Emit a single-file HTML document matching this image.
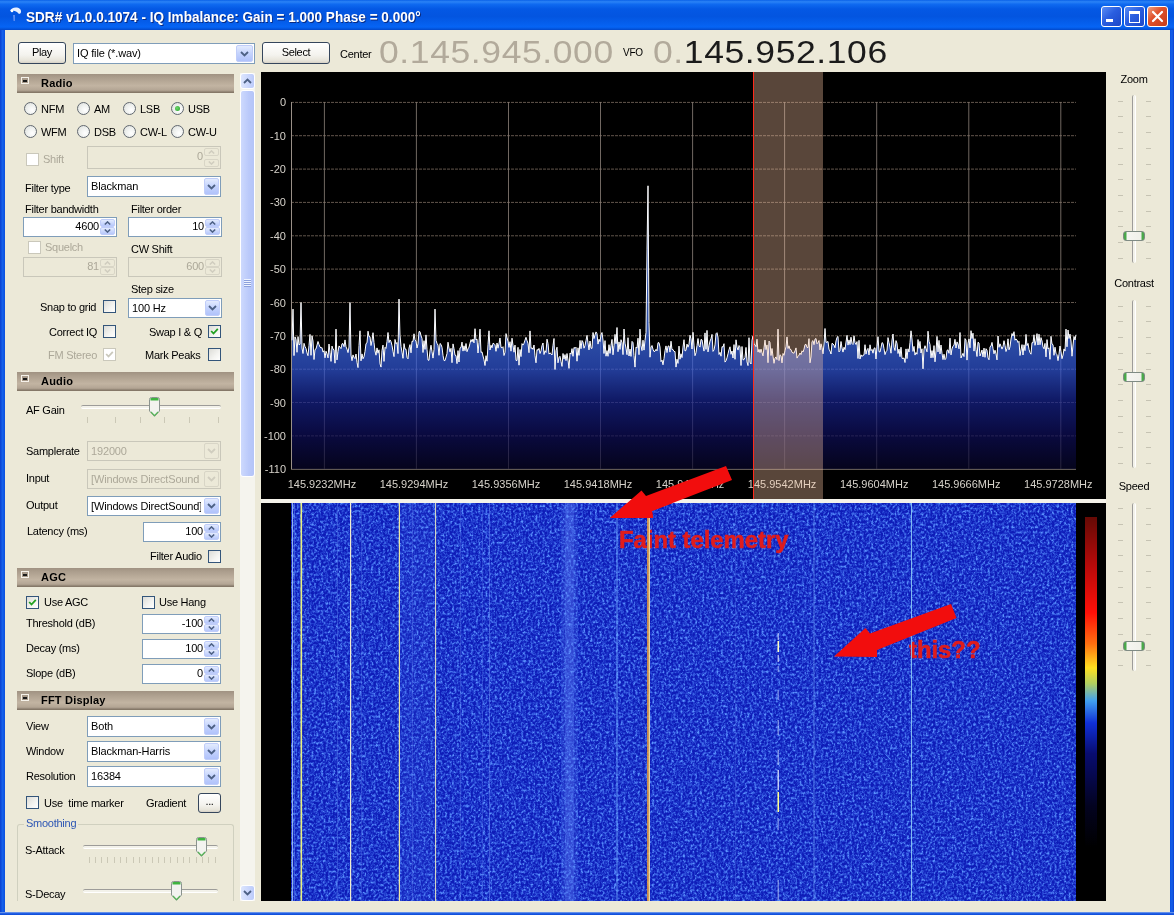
<!DOCTYPE html>
<html><head><meta charset="utf-8"><title>SDR#</title>
<style>
html,body{margin:0;padding:0;}
body{width:1174px;height:915px;overflow:hidden;position:relative;background:#ece9d8;font-family:"Liberation Sans",sans-serif;font-size:11px;color:#000;}
.a{position:absolute;}
.t{position:absolute;white-space:nowrap;line-height:14px;height:14px;font-size:11px;letter-spacing:-0.26px;}
.dis{color:#aca899;}
/* window chrome */
#titlebar{left:0;top:0;width:1174px;height:30px;background:linear-gradient(to bottom,#0a61e8 0%,#2b83f6 6%,#0f6af0 14%,#0458e4 30%,#0355e0 55%,#0560ee 80%,#0664f5 90%,#0355dd 96%,#0347c8 100%);}
#bl{left:0;top:30px;width:5px;height:885px;background:linear-gradient(to right,#0a3fd0,#1560ea 50%,#0a4fe0);}
#br{left:1170px;top:30px;width:4px;height:885px;background:linear-gradient(to right,#0a4fe0,#1560ea 50%,#0a3fd0);}
#bb{left:0;top:912px;width:1174px;height:3px;background:linear-gradient(to bottom,#9db8ee 0,#2a66e6 34%,#0a49d8 100%);}
#title{left:26px;top:9px;color:#fff;font-weight:bold;font-size:14.5px;line-height:16px;height:16px;letter-spacing:0;transform:scaleX(0.936);transform-origin:0 0;text-shadow:1px 1px 0 #0a2a80;}
.wbtn{position:absolute;top:6px;width:19px;height:19px;border:1px solid #fff;border-radius:3px;background:linear-gradient(135deg,#5a8df5 0%,#2a5ee0 45%,#1c47c8 100%);}
/* buttons */
.btn{position:absolute;box-sizing:border-box;letter-spacing:-0.33px;border:1px solid #35465c;border-radius:3px;background:linear-gradient(to bottom,#ffffff 0%,#f4f3ee 60%,#e6e3d8 90%,#d6d0c5 100%);text-align:center;font-size:11px;line-height:19px;}
/* combo */
.combo{position:absolute;box-sizing:border-box;border:1px solid #7f9db9;background:#fff;font-size:11px;line-height:17px;padding-left:3px;white-space:nowrap;overflow:hidden;letter-spacing:-0.15px;}
.combo u{position:absolute;left:3px;top:0;right:19px;bottom:0;overflow:hidden;text-decoration:none;}
.combo .arr{position:absolute;right:1px;top:1px;bottom:1px;width:15px;border-radius:2px;background:linear-gradient(to bottom,#e3ebfe 0%,#c4d3fd 50%,#b0c2fb 100%);border:1px solid #c0cdf9;box-sizing:border-box;}
.combo .arr svg{position:absolute;left:2px;top:50%;margin-top:-3px;}
.combo.d{background:#ece9d8;border-color:#c9c7ba;color:#aca899;}
.combo.d .arr{background:#ece9d8;border-color:#d8d5c6;}
/* spin */
.spin{position:absolute;box-sizing:border-box;border:1px solid #7f9db9;background:#fff;font-size:11px;line-height:17px;text-align:right;padding-right:17px;white-space:nowrap;letter-spacing:-0.2px;}
.spin .ud{position:absolute;right:1px;top:1px;bottom:1px;width:15px;}
.spin .ud i{position:absolute;left:0;width:15px;height:8px;box-sizing:border-box;border:1px solid #c0cdf9;border-radius:2px;background:linear-gradient(to bottom,#e3ebfe,#b6c7fb);}
.spin .ud i.u{top:0;}
.spin .ud i.dn{bottom:0;}
.spin .ud svg{position:absolute;left:3px;}
.spin.d{background:#ece9d8;border-color:#c9c7ba;color:#aca899;}
.spin.d .ud i{background:#ece9d8;border-color:#d8d5c6;}
/* checkbox / radio */
.chk{position:absolute;width:11px;height:11px;border:1px solid #33557a;background:linear-gradient(135deg,#dcdcd7 0%,#f4f4f1 60%,#ffffff 100%);}
.chk.d{border-color:#cac8bb;background:#fff;}
.chk svg{position:absolute;left:1px;top:1px;}
.rad{position:absolute;width:11px;height:11px;border:1px solid #60676f;border-radius:50%;background:radial-gradient(circle at 65% 65%,#ffffff 0%,#eef0ee 50%,#d8dad6 100%);}
.rad b{position:absolute;left:3px;top:3px;width:5px;height:5px;border-radius:50%;background:radial-gradient(circle at 40% 40%,#6fd66f,#21a121);}
/* section header */
.hdr{position:absolute;left:17px;width:217px;height:19px;box-sizing:border-box;background:linear-gradient(to bottom,#a09282 0%,#ac9e8d 20%,#c2b4a2 65%,#b3a594 90%,#8b7e6f 100%);border-bottom:1px solid #857868;}
.hdr span{position:absolute;left:24px;top:2px;font-weight:bold;font-size:11px;line-height:14px;letter-spacing:0.2px;}
.hdr i{position:absolute;left:4px;top:3px;width:6px;height:5px;border:1px solid #f6f2ea;background:#a89a8a;}
.hdr i:after{content:"";position:absolute;left:1px;top:2px;width:4px;height:1.5px;background:#1a1a1a;}
/* sliders */
.trk{position:absolute;height:2px;border-top:1px solid #9d9c99;border-bottom:1px solid #fff;background:#f3f2ea;border-radius:2px;}
.vtrk{position:absolute;width:2px;border-left:1px solid #9d9c99;border-right:1px solid #fff;background:#f3f2ea;border-radius:2px;}
.tick{position:absolute;width:1px;height:6px;background:#cbc8b6;}
.htick{position:absolute;width:5px;height:1px;background:#c6c3b3;}
.big{font-size:30.5px;line-height:38px;color:#b2aa9b;letter-spacing:0.5px;white-space:nowrap;transform:scaleX(1.165);transform-origin:0 0;}
#w{position:absolute;left:0;top:0;width:1174px;height:915px;overflow:hidden;will-change:transform;}

</style></head>
<body>
<div id="w">
<!-- window chrome -->
<div class="a" id="titlebar"></div>
<div class="a" id="bl"></div><div class="a" id="br"></div><div class="a" id="bb"></div>
<svg class="a" style="left:7px;top:6px" width="18" height="18" viewBox="0 0 18 18">
  <path d="M3 5 C4 1.5 10 0.5 13 3 C15 5 14 8 12 8 L10 6 C8 4.5 5 4.5 3 5Z" fill="#e8f0ff"/>
  <path d="M6 9 L8 9 L8 15 L6.5 15 Z" fill="#5a8cf0"/>
  <circle cx="5" cy="5" r="1.3" fill="#fff"/>
</svg>
<div class="t" id="title">SDR# v1.0.0.1074 - IQ Imbalance: Gain = 1.000 Phase = 0.000°</div>
<div class="wbtn" style="left:1101px"><div class="a" style="left:4px;top:12px;width:7px;height:3px;background:#fff"></div></div>
<div class="wbtn" style="left:1124px"><div class="a" style="left:4px;top:4px;width:9px;height:8px;border:1px solid #fff;border-top:3px solid #fff;box-sizing:content-box"></div></div>
<div class="wbtn" style="left:1147px;background:linear-gradient(135deg,#f0a080 0%,#e0522c 40%,#c83c18 100%)">
  <svg class="a" style="left:3px;top:3px" width="13" height="13" viewBox="0 0 13 13"><path d="M2 2 L11 11 M11 2 L2 11" stroke="#fff" stroke-width="2.2" stroke-linecap="round"/></svg>
</div>

<!-- toolbar -->
<div class="btn" style="left:18px;top:42px;width:48px;height:22px;">Play</div>
<div class="combo" style="left:73px;top:43px;width:182px;height:21px;line-height:19px;"><u>IQ file (*.wav)</u><div class="arr" style="width:17px"><svg width="9" height="6" viewBox="0 0 9 6" style="left:3px"><path d="M1 1 L4.5 4.5 L8 1" fill="none" stroke="#4d6185" stroke-width="1.8"/></svg></div></div>
<div class="btn" style="left:262px;top:42px;width:68px;height:22px;">Select</div>
<div class="t" style="left:340px;top:47px;">Center</div>
<div class="a big" style="left:379px;top:33px;">0.145.945.000</div>
<div class="t" style="left:623px;top:46px;font-size:10px;">VFO</div>
<div class="a big" style="left:653px;top:33px;">0.<span style="color:#1b1b1b">145.952.106</span></div>

<div class="hdr" style="top:74px"><i></i><span>Radio</span></div>
<div class="rad" style="left:23.5px;top:102.0px"></div>
<div class="t " style="left:41px;top:102px;">NFM</div>
<div class="rad" style="left:76.5px;top:102.0px"></div>
<div class="t " style="left:94px;top:102px;">AM</div>
<div class="rad" style="left:122.5px;top:102.0px"></div>
<div class="t " style="left:140px;top:102px;">LSB</div>
<div class="rad" style="left:170.5px;top:102.0px"><b></b></div>
<div class="t " style="left:188px;top:102px;">USB</div>
<div class="rad" style="left:23.5px;top:125.0px"></div>
<div class="t " style="left:41px;top:125px;">WFM</div>
<div class="rad" style="left:76.5px;top:125.0px"></div>
<div class="t " style="left:94px;top:125px;">DSB</div>
<div class="rad" style="left:122.5px;top:125.0px"></div>
<div class="t " style="left:140px;top:125px;">CW-L</div>
<div class="rad" style="left:170.5px;top:125.0px"></div>
<div class="t " style="left:188px;top:125px;">CW-U</div>
<div class="chk d" style="left:26px;top:153px"></div>
<div class="t dis" style="left:43px;top:152px;">Shift</div>
<div class="spin d" style="left:87px;top:146px;width:134px;height:23px;line-height:19px">0<div class="ud"><i class="u"><svg style="top:1px" width="7" height="4" viewBox="0 0 7 4"><path d="M0.8 3.5 L3.5 0.9 L6.2 3.5" fill="none" stroke="#d0cdbf" stroke-width="1.5"/></svg></i><i class="dn"><svg style="top:1px" width="7" height="4" viewBox="0 0 7 4"><path d="M0.8 0.5 L3.5 3.1 L6.2 0.5" fill="none" stroke="#d0cdbf" stroke-width="1.5"/></svg></i></div></div>
<div class="t " style="left:25px;top:181px;">Filter type</div>
<div class="combo" style="left:87px;top:176px;width:134px;height:21px;line-height:19px"><u>Blackman</u><div class="arr"><svg width="9" height="6" viewBox="0 0 9 6"><path d="M1 1 L4.5 4.5 L8 1" fill="none" stroke="#4d6185" stroke-width="1.8"/></svg></div></div>
<div class="t " style="left:25px;top:202px;">Filter bandwidth</div>
<div class="t " style="left:131px;top:202px;">Filter order</div>
<div class="spin" style="left:23px;top:217px;width:94px;height:20px;line-height:16px">4600<div class="ud"><i class="u"><svg style="top:1px" width="7" height="4" viewBox="0 0 7 4"><path d="M0.8 3.5 L3.5 0.9 L6.2 3.5" fill="none" stroke="#4d6185" stroke-width="1.5"/></svg></i><i class="dn"><svg style="top:1px" width="7" height="4" viewBox="0 0 7 4"><path d="M0.8 0.5 L3.5 3.1 L6.2 0.5" fill="none" stroke="#4d6185" stroke-width="1.5"/></svg></i></div></div>
<div class="spin" style="left:128px;top:217px;width:94px;height:20px;line-height:16px">10<div class="ud"><i class="u"><svg style="top:1px" width="7" height="4" viewBox="0 0 7 4"><path d="M0.8 3.5 L3.5 0.9 L6.2 3.5" fill="none" stroke="#4d6185" stroke-width="1.5"/></svg></i><i class="dn"><svg style="top:1px" width="7" height="4" viewBox="0 0 7 4"><path d="M0.8 0.5 L3.5 3.1 L6.2 0.5" fill="none" stroke="#4d6185" stroke-width="1.5"/></svg></i></div></div>
<div class="chk d" style="left:28px;top:241px"></div>
<div class="t dis" style="left:45px;top:240px;">Squelch</div>
<div class="t " style="left:131px;top:242px;">CW Shift</div>
<div class="spin d" style="left:23px;top:257px;width:94px;height:20px;line-height:16px">81<div class="ud"><i class="u"><svg style="top:1px" width="7" height="4" viewBox="0 0 7 4"><path d="M0.8 3.5 L3.5 0.9 L6.2 3.5" fill="none" stroke="#d0cdbf" stroke-width="1.5"/></svg></i><i class="dn"><svg style="top:1px" width="7" height="4" viewBox="0 0 7 4"><path d="M0.8 0.5 L3.5 3.1 L6.2 0.5" fill="none" stroke="#d0cdbf" stroke-width="1.5"/></svg></i></div></div>
<div class="spin d" style="left:128px;top:257px;width:94px;height:20px;line-height:16px">600<div class="ud"><i class="u"><svg style="top:1px" width="7" height="4" viewBox="0 0 7 4"><path d="M0.8 3.5 L3.5 0.9 L6.2 3.5" fill="none" stroke="#d0cdbf" stroke-width="1.5"/></svg></i><i class="dn"><svg style="top:1px" width="7" height="4" viewBox="0 0 7 4"><path d="M0.8 0.5 L3.5 3.1 L6.2 0.5" fill="none" stroke="#d0cdbf" stroke-width="1.5"/></svg></i></div></div>
<div class="t " style="left:131px;top:282px;">Step size</div>
<div class="t " style="left:40px;top:300px;">Snap to grid</div>
<div class="chk" style="left:103px;top:300px"></div>
<div class="combo" style="left:128px;top:298px;width:94px;height:20px;line-height:18px"><u>100 Hz</u><div class="arr"><svg width="9" height="6" viewBox="0 0 9 6"><path d="M1 1 L4.5 4.5 L8 1" fill="none" stroke="#4d6185" stroke-width="1.8"/></svg></div></div>
<div class="t " style="left:49px;top:325px;">Correct IQ</div>
<div class="chk" style="left:103px;top:325px"></div>
<div class="t " style="left:149px;top:325px;">Swap I &amp; Q</div>
<div class="chk" style="left:208px;top:325px"><svg width="9" height="9" viewBox="0 0 9 9"><path d="M1.2 4 L3.5 6.5 L7.8 1.8" fill="none" stroke="#21a121" stroke-width="1.8"/></svg></div>
<div class="t dis" style="left:48px;top:348px;">FM Stereo</div>
<div class="chk d" style="left:103px;top:348px"><svg width="9" height="9" viewBox="0 0 9 9"><path d="M1.2 4 L3.5 6.5 L7.8 1.8" fill="none" stroke="#cac8bb" stroke-width="1.8"/></svg></div>
<div class="t " style="left:145px;top:348px;">Mark Peaks</div>
<div class="chk" style="left:208px;top:348px"></div>
<div class="hdr" style="top:372px"><i></i><span>Audio</span></div>
<div class="t " style="left:26px;top:403px;">AF Gain</div>
<div class="trk" style="left:81px;top:405px;width:140px"></div>
<div class="tick" style="left:87.0px;top:417px"></div>
<div class="tick" style="left:115.0px;top:417px"></div>
<div class="tick" style="left:139.5px;top:417px"></div>
<div class="tick" style="left:164.0px;top:417px"></div>
<div class="tick" style="left:188.5px;top:417px"></div>
<div class="tick" style="left:217.5px;top:417px"></div>
<svg class="a" style="left:149.0px;top:397px" width="11" height="20" viewBox="0 0 11 20"><path d="M0.5 2.5 Q0.5 0.5 2.5 0.5 L8.5 0.5 Q10.5 0.5 10.5 2.5 L10.5 14 L5.5 19.3 L0.5 14 Z" fill="#f3f3ef" stroke="#8a938e" stroke-width="1"/><path d="M1.5 2 Q1.5 1 2.5 1 L8.5 1 Q9.5 1 9.5 2 L9.5 3.5 L1.5 3.5Z" fill="#3fb33f"/><path d="M2 15 L5.5 18.6 L9 15" fill="none" stroke="#56b556" stroke-width="1.2"/></svg>
<div class="t " style="left:26px;top:444px;">Samplerate</div>
<div class="combo d" style="left:87px;top:441px;width:134px;height:20px;line-height:18px"><u>192000</u><div class="arr"><svg width="9" height="6" viewBox="0 0 9 6"><path d="M1 1 L4.5 4.5 L8 1" fill="none" stroke="#d0cdbf" stroke-width="1.8"/></svg></div></div>
<div class="t " style="left:26px;top:471px;">Input</div>
<div class="combo d" style="left:87px;top:469px;width:134px;height:20px;line-height:18px"><u>[Windows DirectSound</u><div class="arr"><svg width="9" height="6" viewBox="0 0 9 6"><path d="M1 1 L4.5 4.5 L8 1" fill="none" stroke="#d0cdbf" stroke-width="1.8"/></svg></div></div>
<div class="t " style="left:26px;top:498px;">Output</div>
<div class="combo" style="left:87px;top:496px;width:134px;height:20px;line-height:18px"><u>[Windows DirectSound]</u><div class="arr"><svg width="9" height="6" viewBox="0 0 9 6"><path d="M1 1 L4.5 4.5 L8 1" fill="none" stroke="#4d6185" stroke-width="1.8"/></svg></div></div>
<div class="t " style="left:27px;top:524px;">Latency (ms)</div>
<div class="spin" style="left:143px;top:522px;width:78px;height:20px;line-height:16px">100<div class="ud"><i class="u"><svg style="top:1px" width="7" height="4" viewBox="0 0 7 4"><path d="M0.8 3.5 L3.5 0.9 L6.2 3.5" fill="none" stroke="#4d6185" stroke-width="1.5"/></svg></i><i class="dn"><svg style="top:1px" width="7" height="4" viewBox="0 0 7 4"><path d="M0.8 0.5 L3.5 3.1 L6.2 0.5" fill="none" stroke="#4d6185" stroke-width="1.5"/></svg></i></div></div>
<div class="t " style="left:150px;top:549px;">Filter Audio</div>
<div class="chk" style="left:208px;top:550px"></div>
<div class="hdr" style="top:568px"><i></i><span>AGC</span></div>
<div class="chk" style="left:26px;top:596px"><svg width="9" height="9" viewBox="0 0 9 9"><path d="M1.2 4 L3.5 6.5 L7.8 1.8" fill="none" stroke="#21a121" stroke-width="1.8"/></svg></div>
<div class="t " style="left:44px;top:595px;">Use AGC</div>
<div class="chk" style="left:142px;top:596px"></div>
<div class="t " style="left:159px;top:595px;">Use Hang</div>
<div class="t " style="left:26px;top:616px;">Threshold (dB)</div>
<div class="spin" style="left:142px;top:614px;width:79px;height:20px;line-height:16px">-100<div class="ud"><i class="u"><svg style="top:1px" width="7" height="4" viewBox="0 0 7 4"><path d="M0.8 3.5 L3.5 0.9 L6.2 3.5" fill="none" stroke="#4d6185" stroke-width="1.5"/></svg></i><i class="dn"><svg style="top:1px" width="7" height="4" viewBox="0 0 7 4"><path d="M0.8 0.5 L3.5 3.1 L6.2 0.5" fill="none" stroke="#4d6185" stroke-width="1.5"/></svg></i></div></div>
<div class="t " style="left:26px;top:641px;">Decay (ms)</div>
<div class="spin" style="left:142px;top:639px;width:79px;height:20px;line-height:16px">100<div class="ud"><i class="u"><svg style="top:1px" width="7" height="4" viewBox="0 0 7 4"><path d="M0.8 3.5 L3.5 0.9 L6.2 3.5" fill="none" stroke="#4d6185" stroke-width="1.5"/></svg></i><i class="dn"><svg style="top:1px" width="7" height="4" viewBox="0 0 7 4"><path d="M0.8 0.5 L3.5 3.1 L6.2 0.5" fill="none" stroke="#4d6185" stroke-width="1.5"/></svg></i></div></div>
<div class="t " style="left:26px;top:666px;">Slope (dB)</div>
<div class="spin" style="left:142px;top:664px;width:79px;height:20px;line-height:16px">0<div class="ud"><i class="u"><svg style="top:1px" width="7" height="4" viewBox="0 0 7 4"><path d="M0.8 3.5 L3.5 0.9 L6.2 3.5" fill="none" stroke="#4d6185" stroke-width="1.5"/></svg></i><i class="dn"><svg style="top:1px" width="7" height="4" viewBox="0 0 7 4"><path d="M0.8 0.5 L3.5 3.1 L6.2 0.5" fill="none" stroke="#4d6185" stroke-width="1.5"/></svg></i></div></div>
<div class="hdr" style="top:691px"><i></i><span>FFT Display</span></div>
<div class="t " style="left:26px;top:719px;">View</div>
<div class="combo" style="left:87px;top:716px;width:134px;height:21px;line-height:19px"><u>Both</u><div class="arr"><svg width="9" height="6" viewBox="0 0 9 6"><path d="M1 1 L4.5 4.5 L8 1" fill="none" stroke="#4d6185" stroke-width="1.8"/></svg></div></div>
<div class="t " style="left:26px;top:744px;">Window</div>
<div class="combo" style="left:87px;top:741px;width:134px;height:21px;line-height:19px"><u>Blackman-Harris</u><div class="arr"><svg width="9" height="6" viewBox="0 0 9 6"><path d="M1 1 L4.5 4.5 L8 1" fill="none" stroke="#4d6185" stroke-width="1.8"/></svg></div></div>
<div class="t " style="left:26px;top:769px;">Resolution</div>
<div class="combo" style="left:87px;top:766px;width:134px;height:21px;line-height:19px"><u>16384</u><div class="arr"><svg width="9" height="6" viewBox="0 0 9 6"><path d="M1 1 L4.5 4.5 L8 1" fill="none" stroke="#4d6185" stroke-width="1.8"/></svg></div></div>
<div class="chk" style="left:26px;top:796px"></div>
<div class="t " style="left:44px;top:796px;">Use&nbsp; time marker</div>
<div class="t " style="left:146px;top:796px;">Gradient</div>
<div class="btn" style="left:198px;top:793px;width:23px;height:20px;line-height:14px">...</div>
<div class="a" style="left:17px;top:824px;width:217px;height:77px;border:1px solid #d0d0bf;border-bottom:none;border-radius:3px 3px 0 0;box-sizing:border-box"></div>
<div class="t" style="left:24px;top:816px;color:#2d56b4;background:#ece9d8;padding:0 2px">Smoothing</div>
<div class="t " style="left:25px;top:843px;">S-Attack</div>
<div class="trk" style="left:83px;top:845px;width:135px"></div>
<div class="tick" style="left:88.5px;top:857px"></div>
<div class="tick" style="left:94.8px;top:857px"></div>
<div class="tick" style="left:101.1px;top:857px"></div>
<div class="tick" style="left:107.4px;top:857px"></div>
<div class="tick" style="left:113.7px;top:857px"></div>
<div class="tick" style="left:120.0px;top:857px"></div>
<div class="tick" style="left:126.3px;top:857px"></div>
<div class="tick" style="left:132.6px;top:857px"></div>
<div class="tick" style="left:138.9px;top:857px"></div>
<div class="tick" style="left:145.2px;top:857px"></div>
<div class="tick" style="left:151.5px;top:857px"></div>
<div class="tick" style="left:157.8px;top:857px"></div>
<div class="tick" style="left:164.1px;top:857px"></div>
<div class="tick" style="left:170.4px;top:857px"></div>
<div class="tick" style="left:176.7px;top:857px"></div>
<div class="tick" style="left:183.0px;top:857px"></div>
<div class="tick" style="left:189.3px;top:857px"></div>
<div class="tick" style="left:195.6px;top:857px"></div>
<div class="tick" style="left:201.9px;top:857px"></div>
<div class="tick" style="left:208.2px;top:857px"></div>
<div class="tick" style="left:214.5px;top:857px"></div>
<svg class="a" style="left:196.0px;top:837px" width="11" height="20" viewBox="0 0 11 20"><path d="M0.5 2.5 Q0.5 0.5 2.5 0.5 L8.5 0.5 Q10.5 0.5 10.5 2.5 L10.5 14 L5.5 19.3 L0.5 14 Z" fill="#f3f3ef" stroke="#8a938e" stroke-width="1"/><path d="M1.5 2 Q1.5 1 2.5 1 L8.5 1 Q9.5 1 9.5 2 L9.5 3.5 L1.5 3.5Z" fill="#3fb33f"/><path d="M2 15 L5.5 18.6 L9 15" fill="none" stroke="#56b556" stroke-width="1.2"/></svg>
<div class="t " style="left:25px;top:887px;">S-Decay</div>
<div class="trk" style="left:83px;top:889px;width:135px"></div>
<svg class="a" style="left:171.0px;top:881px" width="11" height="20" viewBox="0 0 11 20"><path d="M0.5 2.5 Q0.5 0.5 2.5 0.5 L8.5 0.5 Q10.5 0.5 10.5 2.5 L10.5 14 L5.5 19.3 L0.5 14 Z" fill="#f3f3ef" stroke="#8a938e" stroke-width="1"/><path d="M1.5 2 Q1.5 1 2.5 1 L8.5 1 Q9.5 1 9.5 2 L9.5 3.5 L1.5 3.5Z" fill="#3fb33f"/><path d="M2 15 L5.5 18.6 L9 15" fill="none" stroke="#56b556" stroke-width="1.2"/></svg>
<div class="a" style="left:5px;top:901px;width:252px;height:11px;background:#ece9d8"></div>
<div class="a" style="left:240px;top:73px;width:15px;height:828px;background:#f5f4ee"></div>
<div class="a" style="left:240px;top:73px;width:15px;height:16px;box-sizing:border-box;border:1px solid #fff;border-radius:3px;background:linear-gradient(to right,#dde6fe,#bccbfb);"><svg class="a" style="left:2px;top:4px" width="9" height="6" viewBox="0 0 9 6"><path d="M1 5 L4.5 1.5 L8 5" fill="none" stroke="#4d6185" stroke-width="1.8"/></svg></div>
<div class="a" style="left:240px;top:885px;width:15px;height:16px;box-sizing:border-box;border:1px solid #fff;border-radius:3px;background:linear-gradient(to right,#dde6fe,#bccbfb);"><svg class="a" style="left:2px;top:4px" width="9" height="6" viewBox="0 0 9 6"><path d="M1 1 L4.5 4.5 L8 1" fill="none" stroke="#4d6185" stroke-width="1.8"/></svg></div>
<div class="a" style="left:240px;top:90px;width:15px;height:387px;box-sizing:border-box;border:1px solid #fff;border-radius:3px;background:linear-gradient(to right,#cdd9fd,#bac9fa 60%,#b4c4f8)"></div>
<div class="a" style="left:244px;top:279px;width:7px;height:1px;background:#eef3ff;border-bottom:1px solid #8ca0dc"></div>
<div class="a" style="left:244px;top:281px;width:7px;height:1px;background:#eef3ff;border-bottom:1px solid #8ca0dc"></div>
<div class="a" style="left:244px;top:283px;width:7px;height:1px;background:#eef3ff;border-bottom:1px solid #8ca0dc"></div>
<div class="a" style="left:244px;top:285px;width:7px;height:1px;background:#eef3ff;border-bottom:1px solid #8ca0dc"></div>
<svg class="a" style="left:261px;top:72px" width="845" height="427" viewBox="261 72 845 427" font-family="Liberation Sans, sans-serif" font-size="11">
<defs><linearGradient id="sf" gradientUnits="userSpaceOnUse" x1="0" y1="330" x2="0" y2="469"><stop offset="0" stop-color="#4375f3"/><stop offset="0.28" stop-color="#3157d9"/><stop offset="0.5" stop-color="#172592"/><stop offset="0.75" stop-color="#0e0e5b"/><stop offset="1" stop-color="#070628"/></linearGradient></defs>
<rect x="261" y="72" width="845" height="427" fill="#000"/>
<line x1="291" x2="1076" y1="102.4" y2="102.4" stroke="#74655b" stroke-width="1" stroke-dasharray="3 1" opacity="0.85"/>
<text x="286" y="106.4" text-anchor="end" fill="#d6d2ca">0</text>
<line x1="291" x2="1076" y1="135.7" y2="135.7" stroke="#74655b" stroke-width="1" stroke-dasharray="3 1" opacity="0.85"/>
<text x="286" y="139.7" text-anchor="end" fill="#d6d2ca">-10</text>
<line x1="291" x2="1076" y1="169.1" y2="169.1" stroke="#74655b" stroke-width="1" stroke-dasharray="3 1" opacity="0.85"/>
<text x="286" y="173.1" text-anchor="end" fill="#d6d2ca">-20</text>
<line x1="291" x2="1076" y1="202.4" y2="202.4" stroke="#74655b" stroke-width="1" stroke-dasharray="3 1" opacity="0.85"/>
<text x="286" y="206.4" text-anchor="end" fill="#d6d2ca">-30</text>
<line x1="291" x2="1076" y1="235.8" y2="235.8" stroke="#74655b" stroke-width="1" stroke-dasharray="3 1" opacity="0.85"/>
<text x="286" y="239.8" text-anchor="end" fill="#d6d2ca">-40</text>
<line x1="291" x2="1076" y1="269.1" y2="269.1" stroke="#74655b" stroke-width="1" stroke-dasharray="3 1" opacity="0.85"/>
<text x="286" y="273.1" text-anchor="end" fill="#d6d2ca">-50</text>
<line x1="291" x2="1076" y1="302.5" y2="302.5" stroke="#74655b" stroke-width="1" stroke-dasharray="3 1" opacity="0.85"/>
<text x="286" y="306.5" text-anchor="end" fill="#d6d2ca">-60</text>
<line x1="291" x2="1076" y1="335.8" y2="335.8" stroke="#74655b" stroke-width="1" stroke-dasharray="3 1" opacity="0.85"/>
<text x="286" y="339.8" text-anchor="end" fill="#d6d2ca">-70</text>
<line x1="291" x2="1076" y1="369.2" y2="369.2" stroke="#74655b" stroke-width="1" stroke-dasharray="3 1" opacity="0.85"/>
<text x="286" y="373.2" text-anchor="end" fill="#d6d2ca">-80</text>
<line x1="291" x2="1076" y1="402.5" y2="402.5" stroke="#74655b" stroke-width="1" stroke-dasharray="3 1" opacity="0.85"/>
<text x="286" y="406.5" text-anchor="end" fill="#d6d2ca">-90</text>
<line x1="291" x2="1076" y1="435.9" y2="435.9" stroke="#74655b" stroke-width="1" stroke-dasharray="3 1" opacity="0.85"/>
<text x="286" y="439.9" text-anchor="end" fill="#d6d2ca">-100</text>
<line x1="291" x2="1076" y1="469.2" y2="469.2" stroke="#8c8279" stroke-width="1"/>
<text x="286" y="473.2" text-anchor="end" fill="#d6d2ca">-110</text>
<line x1="291.5" x2="291.5" y1="102" y2="469" stroke="#9a9088" stroke-width="1"/>
<line x1="324.4" x2="324.4" y1="102" y2="469" stroke="#857b74" stroke-width="1" opacity="0.85"/>
<text x="321.9" y="488" text-anchor="middle" fill="#d6d2ca">145.9232MHz</text>
<line x1="416.4" x2="416.4" y1="102" y2="469" stroke="#857b74" stroke-width="1" opacity="0.85"/>
<text x="413.9" y="488" text-anchor="middle" fill="#d6d2ca">145.9294MHz</text>
<line x1="508.5" x2="508.5" y1="102" y2="469" stroke="#857b74" stroke-width="1" opacity="0.85"/>
<text x="506.0" y="488" text-anchor="middle" fill="#d6d2ca">145.9356MHz</text>
<line x1="600.5" x2="600.5" y1="102" y2="469" stroke="#857b74" stroke-width="1" opacity="0.85"/>
<text x="598.0" y="488" text-anchor="middle" fill="#d6d2ca">145.9418MHz</text>
<line x1="692.6" x2="692.6" y1="102" y2="469" stroke="#857b74" stroke-width="1" opacity="0.85"/>
<text x="690.1" y="488" text-anchor="middle" fill="#d6d2ca">145.9480MHz</text>
<line x1="784.6" x2="784.6" y1="102" y2="469" stroke="#857b74" stroke-width="1" opacity="0.85"/>
<text x="782.1" y="488" text-anchor="middle" fill="#d6d2ca">145.9542MHz</text>
<line x1="876.7" x2="876.7" y1="102" y2="469" stroke="#857b74" stroke-width="1" opacity="0.85"/>
<text x="874.2" y="488" text-anchor="middle" fill="#d6d2ca">145.9604MHz</text>
<line x1="968.8" x2="968.8" y1="102" y2="469" stroke="#857b74" stroke-width="1" opacity="0.85"/>
<text x="966.2" y="488" text-anchor="middle" fill="#d6d2ca">145.9666MHz</text>
<line x1="1060.8" x2="1060.8" y1="102" y2="469" stroke="#857b74" stroke-width="1" opacity="0.85"/>
<text x="1058.3" y="488" text-anchor="middle" fill="#d6d2ca">145.9728MHz</text>
<path d="M292,469 L292,340.3 L293,309.1 L294,355.6 L295,336.9 L296,339.3 L297,352.3 L298,336.6 L299,344.8 L300,344.3 L301,302.5 L302,348.0 L303,353.5 L304,343.3 L305,346.6 L306,348.5 L307,352.9 L308,355.7 L309,345.4 L310,334.4 L311,355.3 L312,335.8 L313,341.0 L314,359.5 L315,349.5 L316,348.9 L317,345.1 L318,341.5 L319,344.5 L320,347.0 L321,348.0 L322,347.6 L323,352.1 L324,350.7 L325,357.8 L326,351.2 L327,353.7 L328,357.9 L329,344.0 L330,352.4 L331,361.4 L332,346.1 L333,349.1 L334,349.9 L335,363.2 L336,329.1 L337,359.9 L338,351.6 L339,345.9 L340,347.2 L341,348.6 L342,343.8 L343,343.6 L344,346.7 L345,339.9 L346,346.8 L347,349.2 L348,352.6 L349,347.0 L350,302.5 L351,355.1 L352,360.7 L353,354.9 L354,357.4 L355,358.6 L356,354.0 L357,362.4 L358,367.6 L359,345.4 L360,330.8 L361,360.8 L362,353.9 L363,358.8 L364,356.8 L365,351.4 L366,343.6 L367,342.8 L368,331.2 L369,336.5 L370,336.7 L371,345.5 L372,340.6 L373,332.7 L374,342.6 L375,351.0 L376,355.2 L377,347.9 L378,353.2 L379,349.8 L380,363.8 L381,367.1 L382,350.4 L383,345.1 L384,361.4 L385,347.3 L386,348.4 L387,341.4 L388,332.5 L389,342.6 L390,339.9 L391,341.6 L392,345.6 L393,351.4 L394,356.6 L395,339.4 L396,343.8 L397,342.5 L398,353.6 L399,299.1 L400,335.5 L401,346.5 L402,352.2 L403,358.3 L404,343.6 L405,349.1 L406,349.2 L407,357.4 L408,358.8 L409,348.0 L410,344.6 L411,352.8 L412,341.2 L413,341.5 L414,333.8 L415,339.8 L416,341.0 L417,348.0 L418,343.9 L419,331.5 L420,331.7 L421,335.7 L422,338.4 L423,352.5 L424,340.7 L425,349.4 L426,334.9 L427,349.3 L428,360.1 L429,360.3 L430,350.8 L431,345.2 L432,351.7 L433,358.1 L434,349.6 L435,309.1 L436,340.4 L437,343.4 L438,345.1 L439,355.3 L440,343.5 L441,344.4 L442,347.3 L443,355.4 L444,360.5 L445,360.6 L446,357.1 L447,353.5 L448,342.2 L449,348.0 L450,351.9 L451,348.3 L452,362.7 L453,343.9 L454,348.7 L455,355.2 L456,355.5 L457,363.6 L458,350.6 L459,362.0 L460,347.9 L461,347.5 L462,342.1 L463,351.1 L464,345.8 L465,350.7 L466,343.5 L467,351.7 L468,348.8 L469,347.2 L470,343.2 L471,339.6 L472,341.8 L473,339.0 L474,342.9 L475,328.7 L476,340.0 L477,339.1 L478,353.0 L479,342.4 L480,329.1 L481,352.5 L482,351.8 L483,356.0 L484,359.8 L485,365.5 L486,355.7 L487,361.2 L488,344.7 L489,330.8 L490,350.0 L491,345.2 L492,347.8 L493,343.3 L494,343.6 L495,344.8 L496,351.3 L497,343.0 L498,348.2 L499,343.7 L500,338.0 L501,347.4 L502,347.8 L503,346.7 L504,355.5 L505,352.3 L506,333.6 L507,337.6 L508,341.4 L509,347.4 L510,341.7 L511,351.2 L512,338.2 L513,345.6 L514,352.2 L515,345.1 L516,360.4 L517,360.5 L518,347.3 L519,365.2 L520,349.5 L521,356.6 L522,343.6 L523,345.1 L524,343.3 L525,340.1 L526,337.3 L527,340.6 L528,343.3 L529,352.7 L530,330.9 L531,348.5 L532,347.7 L533,349.4 L534,345.0 L535,355.8 L536,362.8 L537,349.5 L538,350.3 L539,348.4 L540,353.5 L541,350.9 L542,345.5 L543,343.0 L544,354.5 L545,350.7 L546,352.5 L547,339.2 L548,343.5 L549,354.1 L550,352.9 L551,353.7 L552,355.0 L553,345.3 L554,338.5 L555,369.5 L556,350.6 L557,347.2 L558,362.8 L559,357.4 L560,356.3 L561,361.5 L562,366.4 L563,353.5 L564,359.1 L565,354.6 L566,360.6 L567,353.5 L568,360.1 L569,368.4 L570,353.0 L571,354.2 L572,348.6 L573,356.3 L574,347.4 L575,348.3 L576,347.2 L577,361.2 L578,347.8 L579,355.4 L580,340.4 L581,348.7 L582,340.5 L583,342.0 L584,348.2 L585,345.7 L586,340.4 L587,335.3 L588,342.9 L589,349.9 L590,341.0 L591,348.2 L592,348.4 L593,332.5 L594,338.6 L595,334.9 L596,331.9 L597,333.7 L598,344.1 L599,339.2 L600,341.6 L601,334.8 L602,332.5 L603,340.0 L604,353.5 L605,340.6 L606,356.2 L607,350.6 L608,356.3 L609,344.7 L610,353.4 L611,345.4 L612,339.4 L613,354.8 L614,345.5 L615,334.4 L616,343.7 L617,327.5 L618,351.7 L619,341.9 L620,349.4 L621,339.7 L622,342.5 L623,354.6 L624,329.0 L625,343.2 L626,348.2 L627,354.7 L628,337.7 L629,356.0 L630,349.1 L631,356.4 L632,341.4 L633,342.6 L634,355.6 L635,367.1 L636,347.1 L637,348.1 L638,338.2 L639,354.7 L640,329.1 L641,345.8 L642,350.6 L643,340.2 L644,350.1 L645,340.3 L646,332.5 L647,249.1 L648,185.8 L649,322.5 L650,357.2 L651,347.0 L652,345.5 L653,349.3 L654,351.6 L655,351.2 L656,349.3 L657,350.9 L658,342.7 L659,342.7 L660,347.0 L661,361.7 L662,360.1 L663,364.8 L664,358.6 L665,350.6 L666,345.9 L667,352.6 L668,346.2 L669,345.9 L670,352.1 L671,341.2 L672,349.6 L673,349.5 L674,351.5 L675,351.5 L676,367.1 L677,359.2 L678,363.4 L679,346.1 L680,359.2 L681,353.8 L682,357.6 L683,347.1 L684,339.7 L685,351.0 L686,350.4 L687,344.1 L688,347.2 L689,344.4 L690,335.2 L691,338.8 L692,349.0 L693,332.3 L694,345.1 L695,355.7 L696,352.7 L697,345.5 L698,338.5 L699,346.0 L700,347.1 L701,339.4 L702,339.9 L703,346.0 L704,351.1 L705,332.9 L706,349.4 L707,330.4 L708,351.9 L709,345.7 L710,341.1 L711,338.6 L712,334.4 L713,351.4 L714,349.9 L715,344.9 L716,333.7 L717,332.7 L718,337.1 L719,354.5 L720,352.3 L721,356.2 L722,346.6 L723,347.1 L724,343.7 L725,362.1 L726,360.8 L727,357.8 L728,353.8 L729,349.7 L730,346.8 L731,354.3 L732,351.0 L733,358.0 L734,344.6 L735,359.3 L736,339.8 L737,347.1 L738,350.1 L739,345.5 L740,346.9 L741,365.5 L742,346.5 L743,359.8 L744,359.7 L745,357.6 L746,347.4 L747,361.8 L748,365.6 L749,337.7 L750,362.2 L751,364.0 L752,340.1 L753,336.1 L754,343.9 L755,344.8 L756,346.7 L757,339.2 L758,352.1 L759,349.3 L760,352.7 L761,349.1 L762,352.6 L763,355.9 L764,347.9 L765,340.1 L766,349.6 L767,344.9 L768,362.7 L769,341.1 L770,342.5 L771,355.5 L772,348.5 L773,356.3 L774,363.3 L775,358.1 L776,356.9 L777,359.6 L778,329.1 L779,360.6 L780,354.8 L781,355.7 L782,362.9 L783,353.5 L784,355.3 L785,350.7 L786,346.8 L787,336.9 L788,348.5 L789,345.8 L790,349.4 L791,349.6 L792,352.3 L793,352.9 L794,353.2 L795,350.8 L796,347.9 L797,358.1 L798,356.2 L799,355.2 L800,353.0 L801,354.6 L802,350.8 L803,352.0 L804,349.1 L805,344.6 L806,344.3 L807,347.4 L808,347.6 L809,338.6 L810,362.8 L811,357.0 L812,341.5 L813,340.6 L814,344.7 L815,339.1 L816,338.5 L817,343.8 L818,342.6 L819,340.5 L820,349.9 L821,343.8 L822,347.7 L823,353.8 L824,344.0 L825,328.5 L826,342.4 L827,342.1 L828,341.5 L829,349.2 L830,351.1 L831,354.0 L832,343.3 L833,343.9 L834,345.1 L835,347.8 L836,341.0 L837,337.3 L838,336.4 L839,351.9 L840,350.6 L841,341.5 L842,347.9 L843,352.1 L844,347.2 L845,349.6 L846,342.1 L847,335.3 L848,345.1 L849,339.9 L850,344.6 L851,337.2 L852,343.5 L853,344.5 L854,335.7 L855,342.8 L856,344.5 L857,341.6 L858,358.5 L859,340.3 L860,359.0 L861,354.8 L862,356.6 L863,355.2 L864,355.1 L865,344.7 L866,354.1 L867,349.8 L868,348.4 L869,354.9 L870,344.8 L871,350.7 L872,349.4 L873,353.2 L874,348.3 L875,347.8 L876,359.0 L877,346.4 L878,336.7 L879,351.7 L880,352.0 L881,347.7 L882,342.6 L883,343.4 L884,348.7 L885,354.6 L886,351.7 L887,350.3 L888,337.6 L889,342.6 L890,347.2 L891,353.2 L892,340.1 L893,334.0 L894,347.2 L895,350.5 L896,340.6 L897,343.3 L898,353.5 L899,349.1 L900,356.7 L901,347.2 L902,358.4 L903,358.4 L904,358.0 L905,362.5 L906,348.9 L907,358.6 L908,348.8 L909,352.0 L910,342.3 L911,330.8 L912,339.0 L913,351.4 L914,346.4 L915,355.1 L916,352.5 L917,354.2 L918,339.5 L919,348.3 L920,341.4 L921,353.0 L922,348.8 L923,368.8 L924,349.2 L925,345.7 L926,348.7 L927,351.8 L928,331.2 L929,341.4 L930,344.5 L931,357.9 L932,350.6 L933,357.7 L934,345.6 L935,361.8 L936,350.9 L937,336.4 L938,351.9 L939,340.4 L940,353.9 L941,345.0 L942,353.3 L943,359.6 L944,354.2 L945,359.7 L946,358.2 L947,350.3 L948,349.9 L949,353.3 L950,338.2 L951,354.9 L952,348.9 L953,346.2 L954,345.1 L955,339.3 L956,348.0 L957,341.9 L958,344.0 L959,348.8 L960,332.5 L961,358.0 L962,355.5 L963,353.3 L964,356.6 L965,338.6 L966,340.0 L967,360.1 L968,343.2 L969,338.9 L970,347.8 L971,330.7 L972,338.5 L973,333.2 L974,351.1 L975,338.7 L976,349.4 L977,356.5 L978,342.2 L979,343.0 L980,356.0 L981,353.2 L982,350.0 L983,356.9 L984,348.1 L985,357.3 L986,348.7 L987,350.1 L988,357.9 L989,359.8 L990,346.8 L991,346.0 L992,342.4 L993,348.4 L994,353.8 L995,350.2 L996,353.7 L997,359.9 L998,336.0 L999,347.3 L1000,343.8 L1001,346.2 L1002,349.1 L1003,346.6 L1004,340.7 L1005,345.4 L1006,351.5 L1007,348.4 L1008,338.8 L1009,349.8 L1010,346.8 L1011,339.0 L1012,333.5 L1013,336.0 L1014,331.7 L1015,340.2 L1016,338.9 L1017,340.0 L1018,342.5 L1019,341.3 L1020,355.5 L1021,350.0 L1022,344.6 L1023,355.0 L1024,344.8 L1025,350.6 L1026,334.4 L1027,345.6 L1028,343.4 L1029,349.3 L1030,352.7 L1031,354.2 L1032,342.6 L1033,342.8 L1034,334.8 L1035,345.3 L1036,340.9 L1037,333.6 L1038,345.0 L1039,334.2 L1040,344.7 L1041,337.6 L1042,341.0 L1043,346.9 L1044,348.8 L1045,343.4 L1046,356.9 L1047,339.6 L1048,349.0 L1049,347.8 L1050,359.3 L1051,336.3 L1052,344.1 L1053,344.7 L1054,355.3 L1055,347.2 L1056,353.3 L1057,354.7 L1058,360.6 L1059,354.2 L1060,346.0 L1061,351.8 L1062,358.7 L1063,355.1 L1064,348.9 L1065,351.1 L1066,329.1 L1067,346.8 L1068,330.0 L1069,338.5 L1070,334.1 L1071,341.0 L1072,356.2 L1073,345.0 L1074,336.5 L1075,340.0 L1076,334.8 L1076,469 Z" fill="url(#sf)" fill-opacity="0.7"/>
<polyline points="292,340.3 293,309.1 294,355.6 295,336.9 296,339.3 297,352.3 298,336.6 299,344.8 300,344.3 301,302.5 302,348.0 303,353.5 304,343.3 305,346.6 306,348.5 307,352.9 308,355.7 309,345.4 310,334.4 311,355.3 312,335.8 313,341.0 314,359.5 315,349.5 316,348.9 317,345.1 318,341.5 319,344.5 320,347.0 321,348.0 322,347.6 323,352.1 324,350.7 325,357.8 326,351.2 327,353.7 328,357.9 329,344.0 330,352.4 331,361.4 332,346.1 333,349.1 334,349.9 335,363.2 336,329.1 337,359.9 338,351.6 339,345.9 340,347.2 341,348.6 342,343.8 343,343.6 344,346.7 345,339.9 346,346.8 347,349.2 348,352.6 349,347.0 350,302.5 351,355.1 352,360.7 353,354.9 354,357.4 355,358.6 356,354.0 357,362.4 358,367.6 359,345.4 360,330.8 361,360.8 362,353.9 363,358.8 364,356.8 365,351.4 366,343.6 367,342.8 368,331.2 369,336.5 370,336.7 371,345.5 372,340.6 373,332.7 374,342.6 375,351.0 376,355.2 377,347.9 378,353.2 379,349.8 380,363.8 381,367.1 382,350.4 383,345.1 384,361.4 385,347.3 386,348.4 387,341.4 388,332.5 389,342.6 390,339.9 391,341.6 392,345.6 393,351.4 394,356.6 395,339.4 396,343.8 397,342.5 398,353.6 399,299.1 400,335.5 401,346.5 402,352.2 403,358.3 404,343.6 405,349.1 406,349.2 407,357.4 408,358.8 409,348.0 410,344.6 411,352.8 412,341.2 413,341.5 414,333.8 415,339.8 416,341.0 417,348.0 418,343.9 419,331.5 420,331.7 421,335.7 422,338.4 423,352.5 424,340.7 425,349.4 426,334.9 427,349.3 428,360.1 429,360.3 430,350.8 431,345.2 432,351.7 433,358.1 434,349.6 435,309.1 436,340.4 437,343.4 438,345.1 439,355.3 440,343.5 441,344.4 442,347.3 443,355.4 444,360.5 445,360.6 446,357.1 447,353.5 448,342.2 449,348.0 450,351.9 451,348.3 452,362.7 453,343.9 454,348.7 455,355.2 456,355.5 457,363.6 458,350.6 459,362.0 460,347.9 461,347.5 462,342.1 463,351.1 464,345.8 465,350.7 466,343.5 467,351.7 468,348.8 469,347.2 470,343.2 471,339.6 472,341.8 473,339.0 474,342.9 475,328.7 476,340.0 477,339.1 478,353.0 479,342.4 480,329.1 481,352.5 482,351.8 483,356.0 484,359.8 485,365.5 486,355.7 487,361.2 488,344.7 489,330.8 490,350.0 491,345.2 492,347.8 493,343.3 494,343.6 495,344.8 496,351.3 497,343.0 498,348.2 499,343.7 500,338.0 501,347.4 502,347.8 503,346.7 504,355.5 505,352.3 506,333.6 507,337.6 508,341.4 509,347.4 510,341.7 511,351.2 512,338.2 513,345.6 514,352.2 515,345.1 516,360.4 517,360.5 518,347.3 519,365.2 520,349.5 521,356.6 522,343.6 523,345.1 524,343.3 525,340.1 526,337.3 527,340.6 528,343.3 529,352.7 530,330.9 531,348.5 532,347.7 533,349.4 534,345.0 535,355.8 536,362.8 537,349.5 538,350.3 539,348.4 540,353.5 541,350.9 542,345.5 543,343.0 544,354.5 545,350.7 546,352.5 547,339.2 548,343.5 549,354.1 550,352.9 551,353.7 552,355.0 553,345.3 554,338.5 555,369.5 556,350.6 557,347.2 558,362.8 559,357.4 560,356.3 561,361.5 562,366.4 563,353.5 564,359.1 565,354.6 566,360.6 567,353.5 568,360.1 569,368.4 570,353.0 571,354.2 572,348.6 573,356.3 574,347.4 575,348.3 576,347.2 577,361.2 578,347.8 579,355.4 580,340.4 581,348.7 582,340.5 583,342.0 584,348.2 585,345.7 586,340.4 587,335.3 588,342.9 589,349.9 590,341.0 591,348.2 592,348.4 593,332.5 594,338.6 595,334.9 596,331.9 597,333.7 598,344.1 599,339.2 600,341.6 601,334.8 602,332.5 603,340.0 604,353.5 605,340.6 606,356.2 607,350.6 608,356.3 609,344.7 610,353.4 611,345.4 612,339.4 613,354.8 614,345.5 615,334.4 616,343.7 617,327.5 618,351.7 619,341.9 620,349.4 621,339.7 622,342.5 623,354.6 624,329.0 625,343.2 626,348.2 627,354.7 628,337.7 629,356.0 630,349.1 631,356.4 632,341.4 633,342.6 634,355.6 635,367.1 636,347.1 637,348.1 638,338.2 639,354.7 640,329.1 641,345.8 642,350.6 643,340.2 644,350.1 645,340.3 646,332.5 647,249.1 648,185.8 649,322.5 650,357.2 651,347.0 652,345.5 653,349.3 654,351.6 655,351.2 656,349.3 657,350.9 658,342.7 659,342.7 660,347.0 661,361.7 662,360.1 663,364.8 664,358.6 665,350.6 666,345.9 667,352.6 668,346.2 669,345.9 670,352.1 671,341.2 672,349.6 673,349.5 674,351.5 675,351.5 676,367.1 677,359.2 678,363.4 679,346.1 680,359.2 681,353.8 682,357.6 683,347.1 684,339.7 685,351.0 686,350.4 687,344.1 688,347.2 689,344.4 690,335.2 691,338.8 692,349.0 693,332.3 694,345.1 695,355.7 696,352.7 697,345.5 698,338.5 699,346.0 700,347.1 701,339.4 702,339.9 703,346.0 704,351.1 705,332.9 706,349.4 707,330.4 708,351.9 709,345.7 710,341.1 711,338.6 712,334.4 713,351.4 714,349.9 715,344.9 716,333.7 717,332.7 718,337.1 719,354.5 720,352.3 721,356.2 722,346.6 723,347.1 724,343.7 725,362.1 726,360.8 727,357.8 728,353.8 729,349.7 730,346.8 731,354.3 732,351.0 733,358.0 734,344.6 735,359.3 736,339.8 737,347.1 738,350.1 739,345.5 740,346.9 741,365.5 742,346.5 743,359.8 744,359.7 745,357.6 746,347.4 747,361.8 748,365.6 749,337.7 750,362.2 751,364.0 752,340.1 753,336.1 754,343.9 755,344.8 756,346.7 757,339.2 758,352.1 759,349.3 760,352.7 761,349.1 762,352.6 763,355.9 764,347.9 765,340.1 766,349.6 767,344.9 768,362.7 769,341.1 770,342.5 771,355.5 772,348.5 773,356.3 774,363.3 775,358.1 776,356.9 777,359.6 778,329.1 779,360.6 780,354.8 781,355.7 782,362.9 783,353.5 784,355.3 785,350.7 786,346.8 787,336.9 788,348.5 789,345.8 790,349.4 791,349.6 792,352.3 793,352.9 794,353.2 795,350.8 796,347.9 797,358.1 798,356.2 799,355.2 800,353.0 801,354.6 802,350.8 803,352.0 804,349.1 805,344.6 806,344.3 807,347.4 808,347.6 809,338.6 810,362.8 811,357.0 812,341.5 813,340.6 814,344.7 815,339.1 816,338.5 817,343.8 818,342.6 819,340.5 820,349.9 821,343.8 822,347.7 823,353.8 824,344.0 825,328.5 826,342.4 827,342.1 828,341.5 829,349.2 830,351.1 831,354.0 832,343.3 833,343.9 834,345.1 835,347.8 836,341.0 837,337.3 838,336.4 839,351.9 840,350.6 841,341.5 842,347.9 843,352.1 844,347.2 845,349.6 846,342.1 847,335.3 848,345.1 849,339.9 850,344.6 851,337.2 852,343.5 853,344.5 854,335.7 855,342.8 856,344.5 857,341.6 858,358.5 859,340.3 860,359.0 861,354.8 862,356.6 863,355.2 864,355.1 865,344.7 866,354.1 867,349.8 868,348.4 869,354.9 870,344.8 871,350.7 872,349.4 873,353.2 874,348.3 875,347.8 876,359.0 877,346.4 878,336.7 879,351.7 880,352.0 881,347.7 882,342.6 883,343.4 884,348.7 885,354.6 886,351.7 887,350.3 888,337.6 889,342.6 890,347.2 891,353.2 892,340.1 893,334.0 894,347.2 895,350.5 896,340.6 897,343.3 898,353.5 899,349.1 900,356.7 901,347.2 902,358.4 903,358.4 904,358.0 905,362.5 906,348.9 907,358.6 908,348.8 909,352.0 910,342.3 911,330.8 912,339.0 913,351.4 914,346.4 915,355.1 916,352.5 917,354.2 918,339.5 919,348.3 920,341.4 921,353.0 922,348.8 923,368.8 924,349.2 925,345.7 926,348.7 927,351.8 928,331.2 929,341.4 930,344.5 931,357.9 932,350.6 933,357.7 934,345.6 935,361.8 936,350.9 937,336.4 938,351.9 939,340.4 940,353.9 941,345.0 942,353.3 943,359.6 944,354.2 945,359.7 946,358.2 947,350.3 948,349.9 949,353.3 950,338.2 951,354.9 952,348.9 953,346.2 954,345.1 955,339.3 956,348.0 957,341.9 958,344.0 959,348.8 960,332.5 961,358.0 962,355.5 963,353.3 964,356.6 965,338.6 966,340.0 967,360.1 968,343.2 969,338.9 970,347.8 971,330.7 972,338.5 973,333.2 974,351.1 975,338.7 976,349.4 977,356.5 978,342.2 979,343.0 980,356.0 981,353.2 982,350.0 983,356.9 984,348.1 985,357.3 986,348.7 987,350.1 988,357.9 989,359.8 990,346.8 991,346.0 992,342.4 993,348.4 994,353.8 995,350.2 996,353.7 997,359.9 998,336.0 999,347.3 1000,343.8 1001,346.2 1002,349.1 1003,346.6 1004,340.7 1005,345.4 1006,351.5 1007,348.4 1008,338.8 1009,349.8 1010,346.8 1011,339.0 1012,333.5 1013,336.0 1014,331.7 1015,340.2 1016,338.9 1017,340.0 1018,342.5 1019,341.3 1020,355.5 1021,350.0 1022,344.6 1023,355.0 1024,344.8 1025,350.6 1026,334.4 1027,345.6 1028,343.4 1029,349.3 1030,352.7 1031,354.2 1032,342.6 1033,342.8 1034,334.8 1035,345.3 1036,340.9 1037,333.6 1038,345.0 1039,334.2 1040,344.7 1041,337.6 1042,341.0 1043,346.9 1044,348.8 1045,343.4 1046,356.9 1047,339.6 1048,349.0 1049,347.8 1050,359.3 1051,336.3 1052,344.1 1053,344.7 1054,355.3 1055,347.2 1056,353.3 1057,354.7 1058,360.6 1059,354.2 1060,346.0 1061,351.8 1062,358.7 1063,355.1 1064,348.9 1065,351.1 1066,329.1 1067,346.8 1068,330.0 1069,338.5 1070,334.1 1071,341.0 1072,356.2 1073,345.0 1074,336.5 1075,340.0 1076,334.8" fill="none" stroke="#fff" stroke-width="1" stroke-linejoin="round"/>
<rect x="753" y="72" width="70" height="427" fill="rgba(255,200,165,0.35)"/>
<line x1="753.5" x2="753.5" y1="72" y2="499" stroke="#ff2a1a" stroke-width="1"/>
</svg>
<div class="a" style="left:261px;top:499px;width:845px;height:4px;background:#f4f2ea"></div>
<svg class="a" style="left:261px;top:503px" width="845" height="398" viewBox="261 503 845 398" font-family="Liberation Sans, sans-serif">
<defs>
<filter id="nz" x="0" y="0" width="100%" height="100%" color-interpolation-filters="sRGB">
<feTurbulence type="fractalNoise" baseFrequency="0.42 0.38" numOctaves="3" seed="4" result="t"/>
<feColorMatrix in="t" type="matrix" values="2.2 0 0 0 -0.76  2.2 0 0 0 -0.76  2.2 0 0 0 -0.76  0 0 0 0 1" result="m"/>
<feComponentTransfer in="m"><feFuncR type="gamma" amplitude="0.30" exponent="1.5" offset="0.055"/><feFuncG type="gamma" amplitude="0.46" exponent="1.4" offset="0.11"/><feFuncB type="gamma" amplitude="0.27" exponent="1.2" offset="0.72"/></feComponentTransfer>
</filter>
<linearGradient id="cb" x1="0" y1="0" x2="0" y2="1">
<stop offset="0" stop-color="#650a05"/><stop offset="0.15" stop-color="#b80a0a"/><stop offset="0.29" stop-color="#ff1008"/><stop offset="0.385" stop-color="#ff7010"/><stop offset="0.457" stop-color="#ffe020"/><stop offset="0.505" stop-color="#b0d060"/><stop offset="0.557" stop-color="#40a0f0"/><stop offset="0.624" stop-color="#1030d8"/><stop offset="0.717" stop-color="#080c70"/><stop offset="0.876" stop-color="#030320"/><stop offset="1" stop-color="#000000"/>
</linearGradient>
</defs>
<rect x="261" y="503" width="845" height="398" fill="#000"/>
<rect x="291" y="503" width="785" height="398" fill="#2430d0" filter="url(#nz)"/>
<text x="619" y="548" font-size="23" font-weight="bold" fill="#e01c1c" stroke="#e01c1c" stroke-width="0.5" textLength="169.5" lengthAdjust="spacingAndGlyphs">Faint telemetry</text>
<text x="909" y="658" font-size="23" font-weight="bold" fill="#e01c1c" stroke="#e01c1c" stroke-width="0.5" textLength="71.5" lengthAdjust="spacingAndGlyphs">this??</text>
<rect x="561.0" y="503" width="17.0" height="398" fill="#5a7cf0" opacity="0.20"/>
<rect x="565.0" y="503" width="9.0" height="398" fill="#6a90ff" opacity="0.25"/>
<rect x="412.0" y="503" width="1.0" height="398" fill="#6080f0" opacity="0.35"/>
<rect x="482.0" y="503" width="1.0" height="398" fill="#6080f0" opacity="0.30"/>
<rect x="400.0" y="503" width="36.0" height="398" fill="#5070f0" opacity="0.10"/>
<rect x="292.0" y="503" width="1.0" height="398" fill="#9fc0f0" opacity="0.90"/>
<rect x="294.0" y="503" width="1.0" height="398" fill="#6080f0" opacity="0.50"/>
<rect x="300.5" y="503" width="1.6" height="398" fill="#e8f080" opacity="1.00"/>
<rect x="350.0" y="503" width="1.2" height="398" fill="#f0ecd0" opacity="1.00"/>
<rect x="398.8" y="503" width="1.2" height="398" fill="#ece4a0" opacity="1.00"/>
<rect x="435.0" y="503" width="1.1" height="398" fill="#dcdcc0" opacity="0.95"/>
<rect x="647.2" y="503" width="1.6" height="398" fill="#f0a030" opacity="1.00"/>
<rect x="648.8" y="503" width="1.2" height="398" fill="#f8e8a0" opacity="0.90"/>
<rect x="616.5" y="503" width="1.0" height="398" fill="#70a8ff" opacity="0.85"/>
<rect x="489.0" y="503" width="1.0" height="398" fill="#7090f8" opacity="0.50"/>
<rect x="460.0" y="503" width="1.0" height="398" fill="#6080f0" opacity="0.35"/>
<rect x="337.0" y="503" width="1.0" height="398" fill="#6080f0" opacity="0.40"/>
<rect x="361.0" y="503" width="1.0" height="398" fill="#6080f0" opacity="0.30"/>
<rect x="813.5" y="503" width="1.0" height="398" fill="#70a0f8" opacity="0.60"/>
<rect x="911.0" y="503" width="1.0" height="398" fill="#90d0f8" opacity="0.85"/>
<rect x="735.0" y="503" width="1.0" height="398" fill="#6080f0" opacity="0.25"/>
<rect x="777.5" y="633" width="1.5" height="7" fill="#e0e8ff" opacity="0.60"/>
<rect x="777.5" y="641" width="1.5" height="11" fill="#ffffc0" opacity="1.00"/>
<rect x="777.5" y="655" width="1.5" height="7" fill="#e0e8ff" opacity="0.70"/>
<rect x="777.5" y="666" width="1.5" height="6" fill="#c0d0ff" opacity="0.50"/>
<rect x="777.5" y="690" width="1.5" height="10" fill="#c0d0ff" opacity="0.50"/>
<rect x="777.5" y="720" width="1.5" height="15" fill="#d0e0ff" opacity="0.50"/>
<rect x="777.5" y="750" width="1.5" height="15" fill="#d0e0ff" opacity="0.55"/>
<rect x="777.5" y="770" width="1.5" height="20" fill="#e8f0ff" opacity="0.80"/>
<rect x="777.5" y="792" width="1.5" height="20" fill="#ffff90" opacity="1.00"/>
<rect x="777.5" y="818" width="1.5" height="12" fill="#c0d0ff" opacity="0.50"/>
<rect x="777.5" y="880" width="1.5" height="20" fill="#d0e0ff" opacity="0.50"/>
<rect x="1085" y="517" width="12" height="330" fill="url(#cb)"/>
<path d="M726,466 L732,480 L652,511 L653,518 L610,518 L641.5,490.5 L646,496 Z" fill="#f20d0d" transform="translate(0,0)"/>
<path d="M951,604 L956.5,618 L877,650 L877,657 L834,656.5 L865.5,628 L870,633.5 Z" fill="#f20d0d"/>
</svg>
<svg class="a" style="left:600px;top:460px" width="140" height="70" viewBox="600 460 140 70"><path d="M726,466 L732,480 L652,511 L653,518 L610,518 L641.5,490.5 L646,496 Z" fill="#f20d0d"/></svg>
<div class="t" style="left:1104px;width:60px;text-align:center;top:72px">Zoom</div>
<div class="vtrk" style="left:1132px;top:95.0px;height:168.4px"></div>
<div class="htick" style="left:1117.5px;top:100.5px"></div>
<div class="htick" style="left:1146px;top:100.5px"></div>
<div class="htick" style="left:1117.5px;top:116.2px"></div>
<div class="htick" style="left:1146px;top:116.2px"></div>
<div class="htick" style="left:1117.5px;top:132.0px"></div>
<div class="htick" style="left:1146px;top:132.0px"></div>
<div class="htick" style="left:1117.5px;top:147.7px"></div>
<div class="htick" style="left:1146px;top:147.7px"></div>
<div class="htick" style="left:1117.5px;top:163.5px"></div>
<div class="htick" style="left:1146px;top:163.5px"></div>
<div class="htick" style="left:1117.5px;top:179.2px"></div>
<div class="htick" style="left:1146px;top:179.2px"></div>
<div class="htick" style="left:1117.5px;top:194.9px"></div>
<div class="htick" style="left:1146px;top:194.9px"></div>
<div class="htick" style="left:1117.5px;top:210.7px"></div>
<div class="htick" style="left:1146px;top:210.7px"></div>
<div class="htick" style="left:1117.5px;top:226.4px"></div>
<div class="htick" style="left:1146px;top:226.4px"></div>
<div class="htick" style="left:1117.5px;top:242.2px"></div>
<div class="htick" style="left:1146px;top:242.2px"></div>
<div class="htick" style="left:1117.5px;top:257.9px"></div>
<div class="htick" style="left:1146px;top:257.9px"></div>
<div class="a" style="left:1123px;top:231.3px;width:22px;height:10px;box-sizing:border-box;border:1px solid #7f8b84;border-radius:3px;background:linear-gradient(to right,#4aa84a 0,#4aa84a 2px,#f6f6f2 3px,#f0f0ea 17px,#4aa84a 18px)"></div>
<div class="t" style="left:1104px;width:60px;text-align:center;top:276px">Contrast</div>
<div class="vtrk" style="left:1132px;top:300.1px;height:168.4px"></div>
<div class="htick" style="left:1117.5px;top:305.6px"></div>
<div class="htick" style="left:1146px;top:305.6px"></div>
<div class="htick" style="left:1117.5px;top:321.3px"></div>
<div class="htick" style="left:1146px;top:321.3px"></div>
<div class="htick" style="left:1117.5px;top:337.1px"></div>
<div class="htick" style="left:1146px;top:337.1px"></div>
<div class="htick" style="left:1117.5px;top:352.8px"></div>
<div class="htick" style="left:1146px;top:352.8px"></div>
<div class="htick" style="left:1117.5px;top:368.6px"></div>
<div class="htick" style="left:1146px;top:368.6px"></div>
<div class="htick" style="left:1117.5px;top:384.3px"></div>
<div class="htick" style="left:1146px;top:384.3px"></div>
<div class="htick" style="left:1117.5px;top:400.0px"></div>
<div class="htick" style="left:1146px;top:400.0px"></div>
<div class="htick" style="left:1117.5px;top:415.8px"></div>
<div class="htick" style="left:1146px;top:415.8px"></div>
<div class="htick" style="left:1117.5px;top:431.5px"></div>
<div class="htick" style="left:1146px;top:431.5px"></div>
<div class="htick" style="left:1117.5px;top:447.3px"></div>
<div class="htick" style="left:1146px;top:447.3px"></div>
<div class="htick" style="left:1117.5px;top:463.0px"></div>
<div class="htick" style="left:1146px;top:463.0px"></div>
<div class="a" style="left:1123px;top:372.0px;width:22px;height:10px;box-sizing:border-box;border:1px solid #7f8b84;border-radius:3px;background:linear-gradient(to right,#4aa84a 0,#4aa84a 2px,#f6f6f2 3px,#f0f0ea 17px,#4aa84a 18px)"></div>
<div class="t" style="left:1104px;width:60px;text-align:center;top:479px">Speed</div>
<div class="vtrk" style="left:1132px;top:502.5px;height:168.4px"></div>
<div class="htick" style="left:1117.5px;top:508.0px"></div>
<div class="htick" style="left:1146px;top:508.0px"></div>
<div class="htick" style="left:1117.5px;top:523.7px"></div>
<div class="htick" style="left:1146px;top:523.7px"></div>
<div class="htick" style="left:1117.5px;top:539.5px"></div>
<div class="htick" style="left:1146px;top:539.5px"></div>
<div class="htick" style="left:1117.5px;top:555.2px"></div>
<div class="htick" style="left:1146px;top:555.2px"></div>
<div class="htick" style="left:1117.5px;top:571.0px"></div>
<div class="htick" style="left:1146px;top:571.0px"></div>
<div class="htick" style="left:1117.5px;top:586.7px"></div>
<div class="htick" style="left:1146px;top:586.7px"></div>
<div class="htick" style="left:1117.5px;top:602.4px"></div>
<div class="htick" style="left:1146px;top:602.4px"></div>
<div class="htick" style="left:1117.5px;top:618.2px"></div>
<div class="htick" style="left:1146px;top:618.2px"></div>
<div class="htick" style="left:1117.5px;top:633.9px"></div>
<div class="htick" style="left:1146px;top:633.9px"></div>
<div class="htick" style="left:1117.5px;top:649.7px"></div>
<div class="htick" style="left:1146px;top:649.7px"></div>
<div class="htick" style="left:1117.5px;top:665.4px"></div>
<div class="htick" style="left:1146px;top:665.4px"></div>
<div class="a" style="left:1123px;top:641.3px;width:22px;height:10px;box-sizing:border-box;border:1px solid #7f8b84;border-radius:3px;background:linear-gradient(to right,#4aa84a 0,#4aa84a 2px,#f6f6f2 3px,#f0f0ea 17px,#4aa84a 18px)"></div>
</div>
</body></html>
